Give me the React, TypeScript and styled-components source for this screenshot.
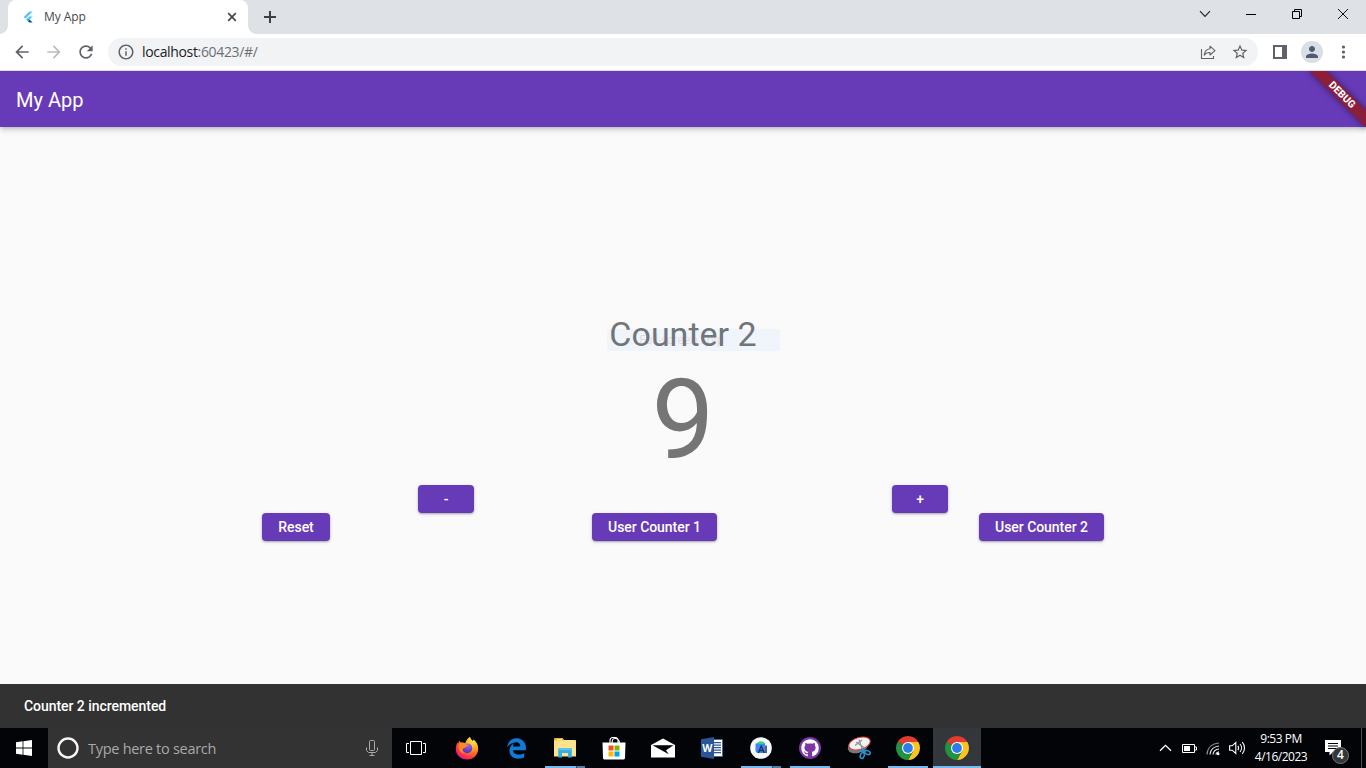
import React from 'react';
import styled, { createGlobalStyle, css } from 'styled-components';
import { FaEdgeLegacy } from 'react-icons/fa6';

const segoe = `'Open Sans', 'Noto Sans', sans-serif`;

const GlobalStyle = createGlobalStyle`
  *, *::before, *::after { box-sizing: border-box; }
  body { margin: 0; overflow: hidden; font-family: Roboto, sans-serif; }
  svg { display: block; flex: none; }
`;

const Screen = styled.div`
  width: 1366px;
  height: 768px;
  display: flex;
  flex-direction: column;
  overflow: hidden;
`;

/* ---------- Browser chrome ---------- */

const TabStrip = styled.div`
  height: 34px;
  flex: none;
  display: flex;
  background: #dee1e6;
  padding-left: 8px;
`;

const Tab = styled.div`
  position: relative;
  width: 240px;
  height: 34px;
  display: flex;
  align-items: center;
  padding: 0 10px 0 12px;
  background: #fff;
  border-radius: 8px 8px 0 0;

  &::before,
  &::after {
    content: '';
    position: absolute;
    bottom: 0;
    width: 8px;
    height: 8px;
  }
  &::before {
    left: -8px;
    background: radial-gradient(circle at 0 0, transparent 7.5px, #fff 8px);
  }
  &::after {
    right: -8px;
    background: radial-gradient(circle at 100% 0, transparent 7.5px, #fff 8px);
  }
`;

const TabTitle = styled.span`
  flex: 1;
  margin-left: 8px;
  font: 400 12px/16px ${segoe};
  letter-spacing: -0.05px;
  color: #45494d;
`;

const NewTab = styled.div`
  width: 44px;
  display: flex;
  align-items: center;
  justify-content: center;
`;

const WindowControls = styled.div`
  margin-left: auto;
  display: flex;
`;

const WindowControl = styled.div`
  width: 46px;
  height: 28px;
  display: flex;
  align-items: center;
  justify-content: center;
`;

const Toolbar = styled.div`
  height: 37px;
  flex: none;
  display: flex;
  align-items: center;
  background: #fff;
  border-bottom: 1px solid #dadce0;
  padding: 0 12px;
`;

const NavButtons = styled.div`
  display: flex;
  gap: 12px;
  margin-right: 12px;
`;

const AddressBar = styled.div`
  width: 1150px;
  height: 28px;
  display: flex;
  align-items: center;
  padding: 0 9px;
  border-radius: 14px;
  background: #f1f3f4;
`;

const Url = styled.span`
  flex: 1;
  margin-left: 7px;
  font: 400 14px/20px ${segoe};
  letter-spacing: -0.34px;
  color: #202124;
`;

const UrlRest = styled.span`
  color: #6b6f74;
`;

const AddressActions = styled.div`
  display: flex;
  align-items: center;
  gap: 15px;
`;

const ToolbarActions = styled.div`
  flex: 1;
  display: flex;
  align-items: center;
  padding-left: 15px;
`;

const Avatar = styled.div`
  width: 22px;
  height: 22px;
  margin: 0 14px;
  display: flex;
  align-items: center;
  justify-content: center;
  border-radius: 50%;
  background: #dadfe6;
`;

const MenuSlot = styled.div`
  margin-left: 5px;
`;

/* ---------- Web page ---------- */

const Page = styled.main`
  position: relative;
  flex: 1;
  display: flex;
  flex-direction: column;
  background: #fafafa;
  overflow: hidden;
`;

const AppBar = styled.header`
  position: relative;
  height: 56px;
  flex: none;
  display: flex;
  align-items: center;
  padding: 2px 16px 0;
  background: #673ab7;
  color: #fff;
  font: 400 20px/24px Roboto, sans-serif;
  letter-spacing: 0;
  box-shadow: 0 2px 4px -1px rgba(0, 0, 0, 0.2), 0 4px 5px rgba(0, 0, 0, 0.1);
`;

const RibbonClip = styled.div`
  position: absolute;
  top: 0;
  right: 0;
  width: 80px;
  height: 80px;
  overflow: hidden;
  pointer-events: none;
`;

const Ribbon = styled.div`
  position: absolute;
  top: 18px;
  right: -16px;
  width: 80px;
  height: 12px;
  transform: rotate(45deg);
  background: #8b1e3b;
  box-shadow: 0 0 6px rgba(0, 0, 0, 0.5);
  color: #fff;
  font: 800 10.2px/12px Roboto, sans-serif;
  text-align: center;
`;

const Body = styled.section`
  flex: 1;
  display: flex;
  flex-direction: column;
  justify-content: center;
  color: #757575;
`;

const CounterName = styled.h1`
  position: relative;
  align-self: center;
  margin: 0;
  font: 400 34px/40px Roboto, sans-serif;
  letter-spacing: 0;
`;

const SnipHint = styled.div`
  position: absolute;
  top: 15px;
  left: -2px;
  width: 173px;
  height: 22px;
  padding-left: 32px;
  background: rgba(10, 140, 255, 0.045);
  color: rgba(170, 100, 120, 0.2);
  font: 400 12px/22px ${segoe};
  letter-spacing: -0.25px;
`;

const CounterValue = styled.div`
  text-align: center;
  font: 400 112px/131px Roboto, sans-serif;
`;

const ButtonRow = styled.div`
  display: flex;
  justify-content: space-evenly;
`;

const ActionButton = styled.button<{ $width: number }>`
  width: ${({ $width }) => $width}px;
  height: 28px;
  padding: 0;
  border: 0;
  border-radius: 4px;
  background: #673ab7;
  color: #fff;
  font: 500 14px/28px Roboto, sans-serif;
  letter-spacing: -0.05px;
  white-space: nowrap;
  box-shadow: 0 1px 2px rgba(0, 0, 0, 0.28), 0 1px 4px rgba(0, 0, 0, 0.1);
`;

const SnackBar = styled.div`
  position: absolute;
  left: 0;
  right: 0;
  bottom: 0;
  height: 44px;
  padding: 0 24px;
  background: #323232;
  color: #fff;
  font: 500 14px/44px Roboto, sans-serif;
  letter-spacing: -0.05px;
`;

/* ---------- Taskbar ---------- */

const Taskbar = styled.footer`
  height: 40px;
  flex: none;
  display: flex;
  background: #020408;
`;

const StartButton = styled.div`
  width: 48px;
  display: flex;
  align-items: center;
  justify-content: center;
`;

const SearchBox = styled.div`
  width: 344px;
  display: flex;
  align-items: center;
  padding: 0 14px 0 8px;
  background: #333;
`;

const SearchText = styled.span`
  flex: 1;
  margin-left: 8px;
  padding-top: 1px;
  font: 400 14.5px/20px ${segoe};
  letter-spacing: -0.28px;
  color: #a9a9a9;
`;

const Tiles = styled.div`
  display: flex;
  gap: 1px;
`;

type TileState = 'idle' | 'open' | 'multi' | 'active';

const Tile = styled.div<{ $state?: TileState }>`
  width: 48px;
  height: 40px;
  display: flex;
  align-items: center;
  justify-content: center;
  ${({ $state }) =>
    $state === 'open' &&
    css`
      background: linear-gradient(#76b9ed, #76b9ed) 4px 38px / 40px 2px no-repeat;
    `}
  ${({ $state }) =>
    $state === 'multi' &&
    css`
      background: linear-gradient(90deg, #76b9ed 31px, #2c4a63 31px, #2c4a63 32px, #4f7fa5 32px) 4px 38px / 40px 2px
        no-repeat;
    `}
  ${({ $state }) =>
    $state === 'active' &&
    css`
      background: linear-gradient(#76b9ed, #76b9ed) 0 38px / 48px 2px no-repeat, #33363a;
    `}
`;

const TaskViewTile = styled(Tile)`
  margin-right: 2px;
`;

const Tray = styled.div`
  margin-left: auto;
  display: flex;
  align-items: center;
`;

const TrayIcons = styled.div`
  display: flex;
  align-items: center;
  gap: 8px;
`;

const Clock = styled.div`
  width: 70px;
  display: flex;
  flex-direction: column;
  align-items: center;
  color: #fff;
  font: 400 12px/18px ${segoe};
  letter-spacing: -0.5px;
  white-space: nowrap;
`;

const Notifications = styled.div`
  position: relative;
  width: 46px;
  height: 40px;
  padding: 12px 0 0 9px;
  border-right: 1px solid #4c4e50;
  margin-right: 4px;
`;

const Badge = styled.span`
  position: absolute;
  left: 16px;
  top: 19px;
  width: 17px;
  height: 17px;
  border: 1px solid #75777a;
  border-radius: 50%;
  background: #33363a;
  color: #fff;
  font: 600 12px/14px ${segoe};
  text-align: center;
`;

/* ---------- Icons ---------- */

const MaterialIcon = ({ path, size = 20, color = '#5f6368' }: { path: string; size?: number; color?: string }) => (
  <svg width={size} height={size} viewBox="0 0 24 24" fill={color}>
    <path d={path} />
  </svg>
);

const paths = {
  back: 'M20 11H7.83l5.59-5.59L12 4l-8 8 8 8 1.41-1.41L7.83 13H20v-2z',
  forward: 'M12 4l-1.41 1.41L16.17 11H4v2h12.17l-5.58 5.59L12 20l8-8z',
  reload:
    'M17.65 6.35C16.2 4.9 14.21 4 12 4c-4.42 0-7.99 3.58-7.99 8s3.57 8 7.99 8c3.73 0 6.84-2.55 7.73-6h-2.08c-.82 2.33-3.04 4-5.65 4-3.31 0-6-2.69-6-6s2.69-6 6-6c1.66 0 3.14.69 4.22 1.78L13 11h7V4l-2.35 2.35z',
  info: 'M11 7h2v2h-2zm0 4h2v6h-2zm1-9C6.48 2 2 6.48 2 12s4.48 10 10 10 10-4.48 10-10S17.52 2 12 2zm0 18c-4.41 0-8-3.59-8-8s3.59-8 8-8 8 3.59 8 8-3.59 8-8 8z',
  star: 'M22 9.24l-7.19-.62L12 2 9.19 8.63 2 9.24l5.46 4.73L5.82 21 12 17.27 18.18 21l-1.63-7.03L22 9.24zM12 15.4l-3.76 2.27 1-4.28-3.32-2.88 4.38-.38L12 6.1l1.71 4.04 4.38.38-3.32 2.88 1 4.28L12 15.4z',
  person: 'M12 12c2.21 0 4-1.79 4-4s-1.79-4-4-4-4 1.79-4 4 1.79 4 4 4zm0 2c-2.67 0-8 1.34-8 4v2h16v-2c0-2.66-5.33-4-8-4z',
};

const FlutterIcon = () => (
  <svg width="16" height="16" viewBox="0 0 16 16">
    <path d="M9.3 2.500h3.300L5.400 9.700 3.700 8z" fill="#54c5f8" />
    <path d="M9.300 7.500h3.300L9.600 10.600 7.900 9z" fill="#54c5f8" />
    <path d="M6.200 10.600 7.900 8.900l1.700 1.700-1.700 1.700z" fill="#29b6f6" />
    <path d="m7.900 12.300 1.700-1.700 3 3H9.300z" fill="#01579b" />
  </svg>
);

const CloseTabIcon = () => (
  <svg width="12" height="12" viewBox="0 0 12 12" stroke="#45494d" strokeWidth="1.700">
    <path d="m2.200 2.200 7.600 7.600M9.800 2.200 2.200 9.800" />
  </svg>
);

const PlusIcon = () => (
  <svg width="12" height="12" viewBox="0 0 12 12" stroke="#3c4043" strokeWidth="2">
    <path d="M6 0v12M0 6h12" />
  </svg>
);

const ShareIcon = () => (
  <svg width="16" height="16" viewBox="0 0 16 16" fill="none" stroke="#5f6368" strokeWidth="1.100">
    <path d="M1.500 5v9.500h12V12" />
    <path d="M10 2.200 15 6.600 10 11V8.500c-2.600-.1-4.400.6-5.800 2.600.4-3.400 2.300-6 5.800-6.400z" strokeLinejoin="round" />
  </svg>
);

const SidePanelIcon = () => (
  <svg width="14" height="14" viewBox="0 0 14 14">
    <path d="M0 0h14v14H0zM2 2v10h7V2z" fill="#5f6368" fillRule="evenodd" />
  </svg>
);

const MenuDots = () => (
  <svg width="4" height="14" viewBox="0 0 4 14" fill="#5f6368">
    <circle cx="1.500" cy="2" r="1.600" />
    <circle cx="1.500" cy="7" r="1.600" />
    <circle cx="1.500" cy="12" r="1.600" />
  </svg>
);

const ChevronIcon = () => (
  <svg width="12" height="8" viewBox="0 0 12 8" fill="none" stroke="#222" strokeWidth="1.100">
    <path d="m1 1.200 5 5.300 5-5.300" />
  </svg>
);

const MinimizeIcon = () => (
  <svg width="10" height="10" viewBox="0 0 10 10" fill="#000">
    <path d="M0 5h10v1H0z" />
  </svg>
);

const RestoreIcon = () => (
  <svg width="10" height="10" viewBox="0 0 10 10" fill="none" stroke="#000">
    <path d="M.5 2.500h7v7h-7zM2.500 2.500v-2h7v7h-2" />
  </svg>
);

const CloseIcon = () => (
  <svg width="10" height="10" viewBox="0 0 10 10" stroke="#111" strokeWidth="1">
    <path d="m0 0 10 10M10 0 0 10" />
  </svg>
);

const WindowsIcon = () => (
  <svg width="16" height="16" viewBox="0 0 16 16" fill="#fff">
    <path d="M0 2.200 6.600 1.300v6.300H0zM7.400 1.200 16 0v7.600H7.400zM0 8.400h6.600v6.300L0 13.800zM7.400 8.400H16V16l-8.600-1.200z" />
  </svg>
);

const CortanaIcon = () => (
  <svg width="24" height="24" viewBox="0 0 24 24" fill="none">
    <circle cx="12" cy="12" r="9.500" stroke="#f5f5f5" strokeWidth="2.400" />
  </svg>
);

const MicIcon = () => (
  <svg width="12" height="18" viewBox="0 0 12 18" fill="none" stroke="#a9a9a9" strokeWidth="1">
    <rect x="3.500" y="1.500" width="5" height="10" rx="1" />
    <path d="M.5 8.500v3l2 2h7l2-2v-3M6 13.500v3M3.500 16.500h5" />
  </svg>
);

const TaskViewIcon = () => (
  <svg width="20" height="14" viewBox="0 0 20 14" fill="none" stroke="#fff">
    <path d="M4.500.5h11v13h-11zM3 2.500H.5v9H3M17 2.500h2.500v9H17" />
  </svg>
);

const FirefoxIcon = () => (
  <svg width="24" height="24" viewBox="0 0 24 24">
    <defs>
      <radialGradient id="foxBody" cx="0.78" cy="0.12" r="1">
        <stop offset="0" stopColor="#fff14f" />
        <stop offset="0.35" stopColor="#ffb31f" />
        <stop offset="0.62" stopColor="#ff6a2b" />
        <stop offset="0.85" stopColor="#fb2b55" />
        <stop offset="1" stopColor="#e5158a" />
      </radialGradient>
      <radialGradient id="foxGlobe" cx="0.6" cy="0.2" r="0.9">
        <stop offset="0" stopColor="#a25ff5" />
        <stop offset="1" stopColor="#4a2ea8" />
      </radialGradient>
    </defs>
    <path
      d="M15 .8c.4 2 1.700 3 3.100 4.400 0-.7.200-1.200.5-1.600 2.600 1.800 4.600 5.300 4.600 9.200C23.200 19 18.500 23.500 12.200 23.500 5.800 23.500.8 18.900.8 13c0-3 .9-5.200 2-6.800l.3 1.500 1-3 1.700 1.900c1.800-.5 3.300-.1 4.500.6C11 4.500 12.700 2 15 .8z"
      fill="url(#foxBody)"
    />
    <circle cx="12.300" cy="12.300" r="4.900" fill="url(#foxGlobe)" />
    <path d="M4.500 7.200c2.500-1 4.700-.3 6.300 1.100.9.100 2 .2 2.700.5-.4 1.300-2.500 1.600-3.200 2.500-.5 1.100-1.700 1-2.700 1.500-.8 1.800.4 3.900 2.700 4.800-3.900.3-6.900-3.300-6.700-7z" fill="#ff8a22" />
  </svg>
);

const FolderIcon = () => (
  <svg width="22" height="20" viewBox="0 0 22 20">
    <path d="M0 1.500C0 .7.500.3 1.200.3h7.400L10 2h11c.6 0 1 .4 1 1v15.500H0z" fill="#ffe28c" />
    <path d="M0 2.500V1.300C0 .6.500.3 1.200.3h7.400L10 2.500z" fill="#f5b51b" />
    <path d="M3 1.200h5v1H3z" fill="#fff6d8" />
    <path d="M4.200 19.500V11.500c0-.8.500-1.300 1.300-1.300h11c.8 0 1.300.5 1.300 1.300v8H14v-4.600H8v4.600z" fill="#35aee8" />
    <path d="M4.200 10.200h13.600v2H4.200z" fill="#58c3f2" />
  </svg>
);

const StoreIcon = () => (
  <svg width="24" height="24" viewBox="0 0 24 24">
    <path d="M8 7V4.500C8 2.800 9.200 1.500 10.800 1.500h2.400C14.800 1.500 16 2.800 16 4.500V7M10.200 7V5c.2-1.600 1-2.400 2.400-2.500 2.600-.3 4.900 1.200 4.900 4.500" fill="none" stroke="#fff" strokeWidth="1.100" />
    <path d="M.5 6.500h23l-.5 15.600c0 .8-.6 1.400-1.400 1.400H2.400c-.8 0-1.400-.6-1.400-1.400z" fill="#fff" />
    <path d="M6.500 9.500h5v5h-5z" fill="#f25022" />
    <path d="M12.500 9.500h5v5h-5z" fill="#7fba00" />
    <path d="M6.500 15.500h5v5h-5z" fill="#ffb900" />
    <path d="M12.500 15.500h5v5h-5z" fill="#00a4ef" />
  </svg>
);

const MailIcon = () => (
  <svg width="24" height="20" viewBox="0 0 24 20">
    <path d="M0 7 12 .5 24 7v12.500H0z" fill="#fff" />
    <path d="M1.500 7.300h21L15 12.300l2.800 4z" fill="#020408" />
  </svg>
);

const WordLetter = styled.text`
  font: 700 10.5px 'Open Sans', sans-serif;
  fill: #fff;
`;

const WordIcon = () => (
  <svg width="22" height="22" viewBox="0 0 22 22">
    <path d="M12 2.500h9.500v17H12z" fill="#fff" stroke="#2a5699" strokeWidth="0.600" />
    <path d="M13 5h7v1.200h-7zM13 7.500h7v1.200h-7zM13 10h7v1.200h-7zM13 12.500h7v1.200h-7zM13 15h7v1.200h-7z" fill="#2a5699" />
    <path d="M0 2.300 13 0v22L0 19.700z" fill="#2a5699" />
    <WordLetter x="1.300" y="14.800">
      W
    </WordLetter>
  </svg>
);

const AndroidStudioIcon = () => (
  <svg width="22" height="22" viewBox="0 0 22 22">
    <circle cx="11" cy="11" r="10.800" fill="#f8f9fa" />
    <path d="M6.500 7C7.500 5.200 9 4.500 11 4.500s3.700 1 4 2.500v4H6.500z" fill="#34d684" />
    <path d="M5.500 6.500h9.500v9.500H8c-1.400 0-2.500-1-2.500-2.400z" fill="#4285f4" />
    <path d="M8 5.200c2-1 5-1 6.500 1.300L11 7.500z" fill="#34d684" />
    <path d="m8.300 16 3-7 3 7M9.600 13.500h3.600" fill="none" stroke="#17335f" strokeWidth="1.300" />
    <path d="M16 8.500v7.500" stroke="#17335f" strokeWidth="1.500" />
  </svg>
);

const GithubIcon = () => (
  <svg width="22" height="22" viewBox="0 0 22 22">
    <circle cx="11" cy="11" r="11" fill="#7b35a4" />
    <g transform="translate(2.300 2.300) scale(1.090)">
      <path
        fill="#fff"
        d="M8 0C3.580 0 0 3.580 0 8c0 3.540 2.290 6.530 5.470 7.590.4.070.55-.17.55-.38 0-.19-.01-.82-.01-1.490-2.010.37-2.530-.49-2.690-.94-.09-.23-.48-.94-.82-1.130-.28-.15-.68-.52-.01-.53.63-.01 1.080.58 1.230.82.72 1.210 1.870.87 2.330.66.070-.52.28-.87.51-1.070-1.780-.2-3.640-.89-3.640-3.950 0-.87.31-1.590.82-2.150-.08-.2-.36-1.020.08-2.120 0 0 .67-.21 2.200.82.64-.18 1.320-.27 2-.27.68 0 1.360.09 2 .27 1.530-1.040 2.200-.82 2.200-.82.44 1.100.16 1.920.08 2.120.51.56.82 1.270.82 2.150 0 3.070-1.870 3.750-3.650 3.950.29.25.54.73.54 1.480 0 1.070-.01 1.930-.01 2.200 0 .21.15.46.55.38A8.013 8.013 0 0 0 16 8c0-4.420-3.580-8-8-8z"
      />
    </g>
  </svg>
);

const SnippingIcon = () => (
  <svg width="24" height="24" viewBox="0 0 24 24">
    <ellipse cx="11" cy="10.500" rx="10.500" ry="6.200" transform="rotate(-18 11 10.500)" fill="#77797c" />
    <ellipse cx="12.500" cy="7.500" rx="11" ry="6" transform="rotate(-16 12.500 7.500)" fill="#f2f2f2" stroke="#d63b3b" strokeWidth="1" />
    <path d="M8 9.500 15 4M9 6l8 5.500M12 3.500l3 9" stroke="#8d9196" strokeWidth="1.100" />
    <g fill="none" stroke="#2795d4" strokeWidth="1.600">
      <ellipse cx="15.300" cy="19.500" rx="1.900" ry="3" transform="rotate(20 15.300 19.500)" />
      <ellipse cx="20.500" cy="16.500" rx="2.900" ry="1.800" transform="rotate(25 20.500 16.500)" />
      <path d="m15 12 1.500 4.500M18.500 15.300 13 15" />
    </g>
  </svg>
);

const ChromeIcon = () => (
  <svg width="24" height="24" viewBox="0 0 24 24">
    <path d="M12 12 1.610 6A12 12 0 0 1 22.390 6z" fill="#e33b2e" />
    <path d="M12 12v12A12 12 0 0 1 1.610 6z" fill="#229342" />
    <path d="M12 6h10.390A12 12 0 0 1 12 24l5.200-9z" fill="#fcc31e" />
    <path d="M1.610 6 6.800 15 12 12z" fill="#229342" />
    <path d="M6.800 15 12 24l5.200-9z" fill="#229342" />
    <circle cx="12" cy="12" r="6" fill="#fff" />
    <circle cx="12" cy="12" r="4.900" fill="#2b7de9" />
  </svg>
);

const TrayChevron = () => (
  <svg width="14" height="14" viewBox="0 0 14 14" fill="none" stroke="#fff" strokeWidth="1.300">
    <path d="m1 9.800 5.500-5.500 5.500 5.500" />
  </svg>
);

const BatteryIcon = () => (
  <svg width="16" height="16" viewBox="0 0 16 16">
    <path d="M1.500 4.500h12v8h-12zM14 7h1.500v3H14" fill="none" stroke="#fff" />
    <path d="M3 6h6v5H3z" fill="#fff" />
  </svg>
);

const WifiIcon = () => (
  <svg width="16" height="16" viewBox="0 0 16 16" fill="none">
    <path d="M2 14.500C2.500 8 7 3.500 14 3" stroke="#8d9093" strokeWidth="1.200" />
    <path d="M5 14.500C5.500 9.500 8.800 6.500 14 6M8 14.500c.4-3 2.500-5.200 6-5.500M10.800 14.500c.4-1.600 1.500-2.500 3.200-2.700" stroke="#e4e4e4" strokeWidth="1.200" />
    <circle cx="13.200" cy="14" r="1.300" fill="#fff" />
  </svg>
);

const SpeakerIcon = () => (
  <svg width="17" height="16" viewBox="0 0 17 16" fill="none" stroke="#fff" strokeWidth="1.100">
    <path d="M.6 5.800h2.600L6.800 2.500v11L3.200 10.200H.6z" />
    <path d="M8.800 5.800c1 1.300 1 3.100 0 4.400M11 4c2 2.300 2 5.700 0 8M13.300 2.200c2.900 3.400 2.900 8.200 0 11.600" />
  </svg>
);

const MessageIcon = () => (
  <svg width="16" height="16" viewBox="0 0 16 16">
    <path d="M0 0h16v12H8l-3.500 3.500V12H0z" fill="#fff" />
    <path d="M3 3h10v1H3zM3 5.500h10v1H3zM3 8h10v1H3z" fill="#020408" />
  </svg>
);

const apps: { name: string; icon: React.ReactNode; state: TileState }[] = [
  { name: 'firefox', icon: <FirefoxIcon />, state: 'idle' },
  { name: 'edge', icon: <FaEdgeLegacy size={21} color="#0f7bd8" />, state: 'idle' },
  { name: 'explorer', icon: <FolderIcon />, state: 'multi' },
  { name: 'store', icon: <StoreIcon />, state: 'idle' },
  { name: 'mail', icon: <MailIcon />, state: 'idle' },
  { name: 'word', icon: <WordIcon />, state: 'idle' },
  { name: 'studio', icon: <AndroidStudioIcon />, state: 'multi' },
  { name: 'github', icon: <GithubIcon />, state: 'open' },
  { name: 'snip', icon: <SnippingIcon />, state: 'idle' },
  { name: 'chrome', icon: <ChromeIcon />, state: 'open' },
  { name: 'chrome-active', icon: <ChromeIcon />, state: 'active' },
];

const App = () => (
  <Screen>
    <GlobalStyle />
    <TabStrip>
      <Tab>
        <FlutterIcon />
        <TabTitle>My App</TabTitle>
        <CloseTabIcon />
      </Tab>
      <NewTab>
        <PlusIcon />
      </NewTab>
      <WindowControls>
        <WindowControl><ChevronIcon /></WindowControl>
        <WindowControl><MinimizeIcon /></WindowControl>
        <WindowControl><RestoreIcon /></WindowControl>
        <WindowControl><CloseIcon /></WindowControl>
      </WindowControls>
    </TabStrip>

    <Toolbar>
      <NavButtons>
        <MaterialIcon path={paths.back} />
        <MaterialIcon path={paths.forward} color="#babcbe" />
        <MaterialIcon path={paths.reload} />
      </NavButtons>
      <AddressBar>
        <MaterialIcon path={paths.info} size={18} />
        <Url>
          localhost<UrlRest>:60423/#/</UrlRest>
        </Url>
        <AddressActions>
          <ShareIcon />
          <MaterialIcon path={paths.star} size={18} />
        </AddressActions>
      </AddressBar>
      <ToolbarActions>
        <SidePanelIcon />
        <Avatar>
          <MaterialIcon path={paths.person} size={18} color="#4f5b70" />
        </Avatar>
        <MenuSlot>
          <MenuDots />
        </MenuSlot>
      </ToolbarActions>
    </Toolbar>

    <Page>
      <AppBar>My App</AppBar>
      <Body>
        <CounterName>
          Counter 2<SnipHint>Full-screen Snip</SnipHint>
        </CounterName>
        <CounterValue>9</CounterValue>
        <ButtonRow>
          <ActionButton $width={56}>-</ActionButton>
          <ActionButton $width={56}>+</ActionButton>
        </ButtonRow>
        <ButtonRow>
          <ActionButton $width={68}>Reset</ActionButton>
          <ActionButton $width={125}>User Counter 1</ActionButton>
          <ActionButton $width={125}>User Counter 2</ActionButton>
        </ButtonRow>
      </Body>
      <SnackBar>Counter 2 incremented</SnackBar>
      <RibbonClip>
        <Ribbon>DEBUG</Ribbon>
      </RibbonClip>
    </Page>

    <Taskbar>
      <StartButton>
        <WindowsIcon />
      </StartButton>
      <SearchBox>
        <CortanaIcon />
        <SearchText>Type here to search</SearchText>
        <MicIcon />
      </SearchBox>
      <Tiles>
        <TaskViewTile>
          <TaskViewIcon />
        </TaskViewTile>
        {apps.map(({ name, icon, state }) => (
          <Tile key={name} $state={state}>
            {icon}
          </Tile>
        ))}
      </Tiles>
      <Tray>
        <TrayIcons>
          <TrayChevron />
          <BatteryIcon />
          <WifiIcon />
          <SpeakerIcon />
        </TrayIcons>
        <Clock>
          <span>9:53 PM</span>
          <span>4/16/2023</span>
        </Clock>
        <Notifications>
          <MessageIcon />
          <Badge>4</Badge>
        </Notifications>
      </Tray>
    </Taskbar>
  </Screen>
);

export default App;
